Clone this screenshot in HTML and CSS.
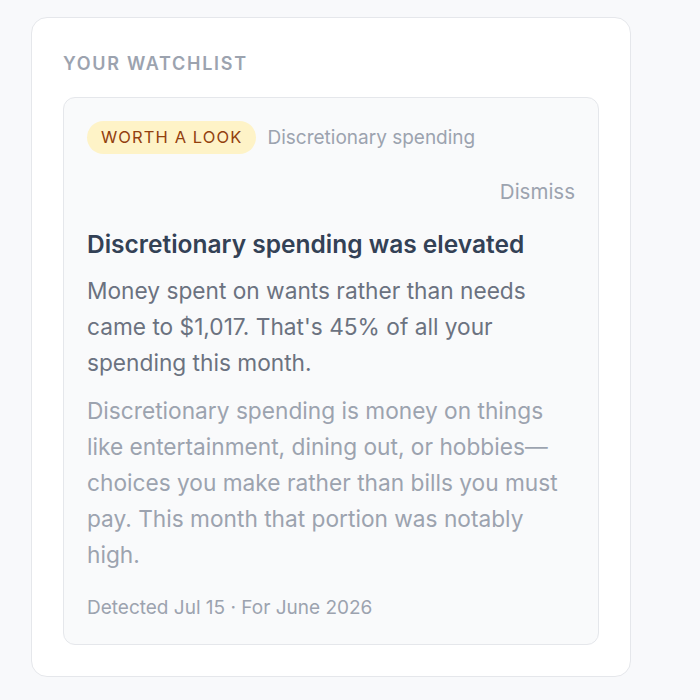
FILE: index.html
```html
<!DOCTYPE html>
<html lang="en">
<head>
   <meta charset="UTF-8">
   <meta name="viewport" content="width=device-width, initial-scale=1.0">
   <title>Watchlist</title>
   <link rel="stylesheet" href="styles.css">
</head>
<body class="body">
   <div class="watchlist">
      <h2 class="watchlist-title">Your watchlist</h2>

      <div class="insight">
         <div class="insight-head">
            <span class="badge badge-look">Worth a look</span>
            <span class="insight-category">Discretionary spending</span>
         </div>
         <div class="insight-actions">
            <button class="link-button">Dismiss</button>
         </div>
         <h3 class="insight-title">Discretionary spending was elevated</h3>
         <p class="insight-text">Money spent on wants rather than needs came to $1,017. That's 45% of all your spending this month.</p>
         <p class="insight-note">Discretionary spending is money on things like entertainment, dining out, or hobbies—choices you make rather than bills you must pay. This month that portion was notably high.</p>
         <div class="insight-meta">Detected Jul 15 · For June 2026</div>
      </div>
   </div>
</body>
</html>
```

FILE: styles.css
```css
:root {
   --page-bg: #f8f9fb;
   --card-bg: #ffffff;
   --inner-bg: #f9fafb;
   --border: #e5e7eb;
   --text-strong: #334155;
   --text-body: #6b7280;
   --text-muted: #9ca3af;
   --badge-bg: #fef3c7;
   --badge-text: #92400e;
}

* { box-sizing: border-box; }

.body { margin: 0; padding: 17px 0 0 31px; background-color: var(--page-bg); font-family: Inter, "Noto Sans", sans-serif; }

.watchlist { width: 600px; background-color: var(--card-bg); border: 1px solid var(--border); border-radius: 16px; padding: 33px 31px 31px; }
.watchlist-title { margin: 0 0 20px; font-size: 18px; line-height: 26px; font-weight: 600; letter-spacing: 1.7px; text-transform: uppercase; color: var(--text-muted); }

.insight { background-color: var(--inner-bg); border: 1px solid var(--border); border-radius: 12px; padding: 23px 23px 22px; }
.insight-head { display: flex; align-items: center; gap: 11px; }
.badge { display: inline-block; padding: 4px 14px; border-radius: 999px; font-size: 16.5px; line-height: 25px; letter-spacing: 1.1px; text-transform: uppercase; }
.badge-look { background-color: var(--badge-bg); color: var(--badge-text); }
.insight-category { font-size: 19px; color: var(--text-muted); }

.insight-actions { display: flex; justify-content: flex-end; margin-top: 23px; }
.link-button { background: none; border: none; padding: 0; font-family: inherit; font-size: 20.5px; line-height: 30px; color: var(--text-muted); cursor: pointer; }

.insight-title { margin: 21px 0 13px; font-size: 24.5px; line-height: 32px; font-weight: 600; color: var(--text-strong); }
.insight-text { margin: 0 0 12px; font-size: 22.7px; line-height: 36px; color: var(--text-body); }
.insight-note { margin: 0 0 21px; font-size: 22.7px; line-height: 36px; color: var(--text-muted); }
.insight-meta { font-size: 19px; line-height: 28px; color: var(--text-muted); }
```
